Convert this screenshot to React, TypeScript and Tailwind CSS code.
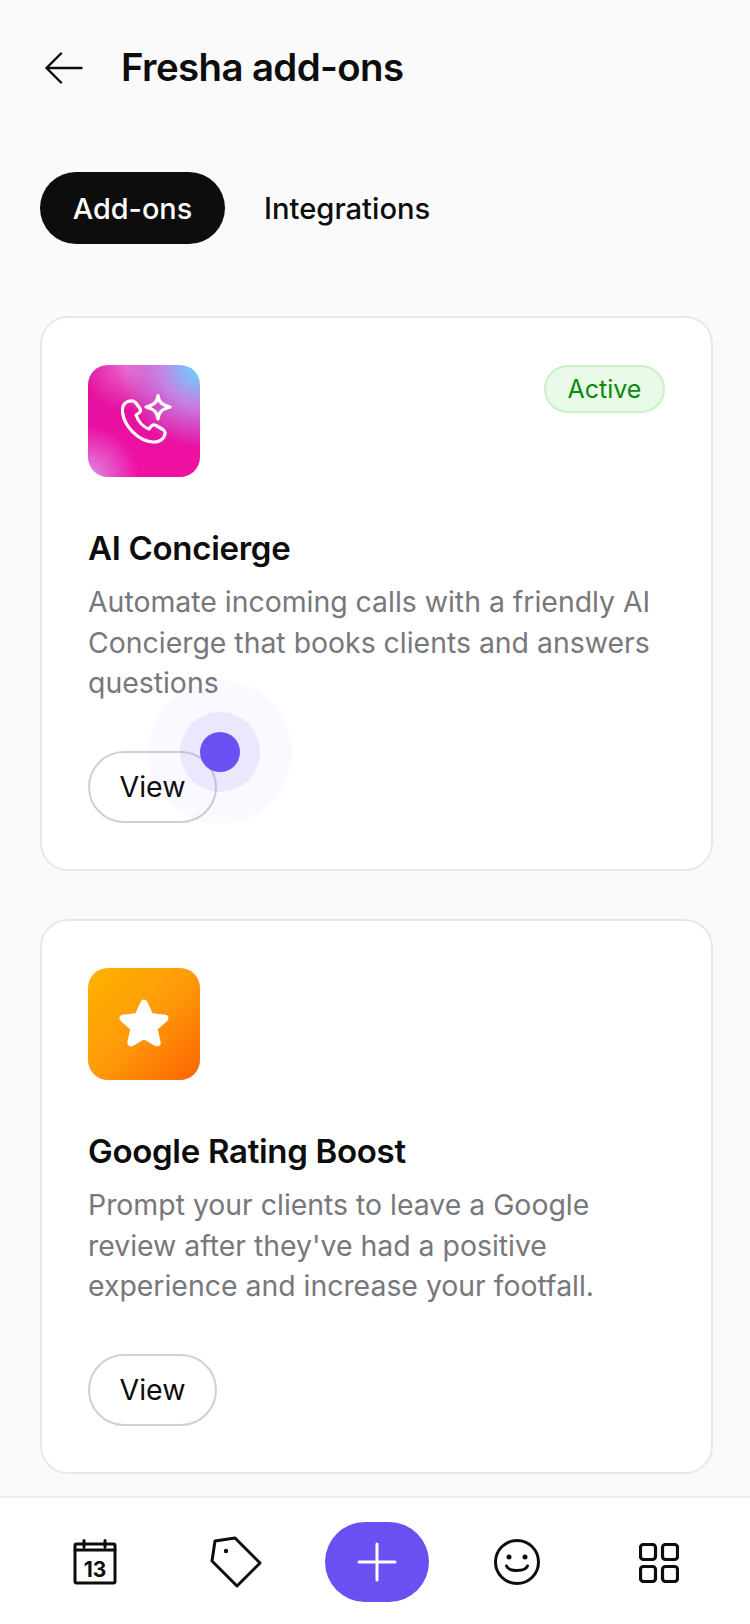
const font = "[font-family:Inter,'Noto_Sans',sans-serif]";

function BackArrow() {
  return (
    <svg width="38" height="32" viewBox="0 0 38 32" fill="none" stroke="#0d0d0d" strokeWidth="2.4" strokeLinecap="round" strokeLinejoin="round">
      <path d="M16 1.500L1.500 16L16 30.500M1.500 16H36.500" />
    </svg>
  );
}

function PhoneSparkleIcon() {
  return (
    <svg width="52" height="52" viewBox="0 0 52 52" fill="none" stroke="white" strokeWidth="3.2" strokeLinejoin="round" strokeLinecap="round" className="mb-[3px] ml-[5px]">
      <path d="M7 7.500C3 9 1 13 1.500 18C3 32 17 47 32 48C38 48.500 43 45 44 40C44.500 38 43.500 36.500 42 35.500L35 31.500C33 30.500 31 31 30 32.500L28 35C22 33 17 27 15 21L18 19C19.500 18 20 16 19 14.500L14.500 8.500C13 7 10 6.500 7 7.500Z" />
      <path d="M37 1.500C38 8 40 10.500 49 13C40 15.500 38 18 37 25C36 18 34 15.500 25 13C34 10.500 36 8 37 1.500Z" />
    </svg>
  );
}

function StarIcon() {
  return (
    <svg width="52" height="52" viewBox="0 0 50 50" fill="white" stroke="white" strokeWidth="7" strokeLinejoin="round">
      <polygon points="25,5 31,18 45,19.500 34.500,29 37.500,43 25,36 12.500,43 15.500,29 5,19.500 19,18" />
    </svg>
  );
}

function CalendarIcon() {
  return (
    <svg width="44" height="46" viewBox="0 0 44 46" fill="none" stroke="#0d0d0d" strokeWidth="3" strokeLinecap="round" strokeLinejoin="round">
      <rect x="2" y="5" width="40" height="39" rx="1.500" />
      <path d="M2 11H42M11 1.500V8M32 1.500V8" />
      <text x="22" y="38" textAnchor="middle" fontFamily="Inter, sans-serif" fontSize="21" fontWeight="700" fill="#0d0d0d" stroke="none">13</text>
    </svg>
  );
}

function TagIcon() {
  return (
    <svg width="52" height="52" viewBox="0 0 52 52" fill="none" stroke="#0d0d0d" strokeWidth="3" strokeLinejoin="round">
      <path d="M5 5L25 2L50 27L27 50L2 25Z" />
      <circle cx="16" cy="15" r="2.200" fill="#0d0d0d" stroke="none" />
    </svg>
  );
}

function SmileIcon() {
  return (
    <svg width="48" height="48" viewBox="0 0 48 48" fill="none" stroke="#0d0d0d" strokeWidth="3" strokeLinecap="round" className="mr-[2px]">
      <circle cx="24" cy="24" r="21.500" />
      <circle cx="16" cy="19" r="2.500" fill="#0d0d0d" stroke="none" />
      <circle cx="32" cy="19" r="2.500" fill="#0d0d0d" stroke="none" />
      <path d="M13.500 28C16 34 32 34 34.500 28" />
    </svg>
  );
}

function GridIcon() {
  return (
    <svg width="40" height="40" viewBox="0 0 40 40" fill="none" stroke="#0d0d0d" strokeWidth="3.200" className="mt-[2px]">
      <rect x="1.500" y="1.500" width="15" height="15" rx="3" />
      <rect x="23.500" y="1.500" width="15" height="15" rx="3" />
      <rect x="1.500" y="23.500" width="15" height="15" rx="3" />
      <rect x="23.500" y="23.500" width="15" height="15" rx="3" />
    </svg>
  );
}

function ViewButton() {
  return (
    <button className="mt-[47px] flex h-[72px] w-[129px] items-center justify-center rounded-full border-2 border-[#d0d0d0] pt-[2px] text-[28.500px] text-[#0d0d0d]">
      View
    </button>
  );
}

export default function App() {
  return (
    <div className={`flex h-[1624px] w-[750px] flex-col overflow-hidden bg-[#fafafa] ${font}`}>
      <header className="flex h-[136px] items-center pl-[45px]">
        <BackArrow />
        <h1 className="ml-[38px] text-[38.400px] font-semibold tracking-[-0.6px] text-[#0d0d0d]">Fresha add-ons</h1>
      </header>

      <div className="mt-[36px] flex items-center pl-[40px]">
        <div className="flex h-[72px] w-[185px] items-center justify-center rounded-full bg-[#0d0d0d] pt-[1px] text-[28.800px] font-medium text-white">
          Add-ons
        </div>
        <div className="ml-[39px] pt-[1px] text-[29.200px] font-medium text-[#0d0d0d]">Integrations</div>
      </div>

      <main className="mt-[72px] flex flex-1 flex-col gap-[48px] pr-[37px] pl-[40px]">
        <section className="relative h-[555px] rounded-[28px] border-2 border-[#e8e8e8] bg-white px-[46px] pt-[47px]">
          <div className="flex items-start justify-between">
            <div className="flex h-[112px] w-[112px] items-center justify-center rounded-[20px] bg-[radial-gradient(circle_at_100%_0%,#74bffe_0%,#7cc0fb_8%,rgba(190,150,240,0.85)_25%,rgba(224,100,210,0)_52%),radial-gradient(circle_at_0%_100%,#e08ce6_0%,rgba(230,120,220,0)_32%),radial-gradient(circle_at_35%_0%,#ee66cc_0%,rgba(238,102,204,0)_35%),linear-gradient(180deg,#e0109e,#f010a4)]">
              <PhoneSparkleIcon />
            </div>
            <div className="flex h-[48px] w-[121px] items-center justify-center rounded-full border-2 border-[#c9f0c6] bg-[#e9fbe8] pt-[2px] text-[25px] text-[#0a8a0a]">
              Active
            </div>
          </div>
          <h2 className="mt-[51px] text-[33px] leading-[40px] font-semibold tracking-[-0.3px] text-[#0d0d0d]">AI Concierge</h2>
          <p className="mt-[14px] text-[28.400px] leading-[40.500px] text-[#77777c]">
            Automate incoming calls with a friendly AI Concierge that books clients and answers questions
          </p>
          <ViewButton />
          {/* touch indicator */}
          <div className="absolute top-[362px] left-[106px] flex h-[144px] w-[144px] items-center justify-center rounded-full bg-[#6950f3]/[0.035]">
            <div className="flex h-[80px] w-[80px] items-center justify-center rounded-full bg-[#6950f3]/10">
              <div className="h-[40px] w-[40px] rounded-full bg-[#6950f3]" />
            </div>
          </div>
        </section>

        <section className="h-[555px] rounded-[28px] border-2 border-[#e8e8e8] bg-white px-[46px] pt-[47px]">
          <div className="flex h-[112px] w-[112px] items-center justify-center rounded-[20px] bg-[linear-gradient(135deg,#ffb300,#ff9a0a_50%,#fb6400)]">
            <StarIcon />
          </div>
          <h2 className="mt-[51px] text-[33px] leading-[40px] font-semibold tracking-[-0.3px] text-[#0d0d0d]">Google Rating Boost</h2>
          <p className="mt-[14px] text-[28.400px] leading-[40.500px] text-[#77777c]">
            Prompt your clients to leave a Google review after they've had a positive experience and increase your footfall.
          </p>
          <ViewButton />
        </section>
      </main>

      <nav className="grid h-[128px] shrink-0 grid-cols-[repeat(5,141px)] items-center border-t-2 border-[#eeeeee] bg-white pt-[2px] pl-[24px]">
        <div className="flex justify-center"><CalendarIcon /></div>
        <div className="flex justify-center"><TagIcon /></div>
        <div className="flex justify-center">
          <button className="flex h-[80px] w-[104px] items-center justify-center rounded-full bg-[#6950f3]">
            <svg width="40" height="40" viewBox="0 0 40 40" stroke="white" strokeWidth="3" strokeLinecap="round">
              <path d="M20 2V38M2 20H38" />
            </svg>
          </button>
        </div>
        <div className="flex justify-center"><SmileIcon /></div>
        <div className="flex justify-center"><GridIcon /></div>
      </nav>
    </div>
  );
}
